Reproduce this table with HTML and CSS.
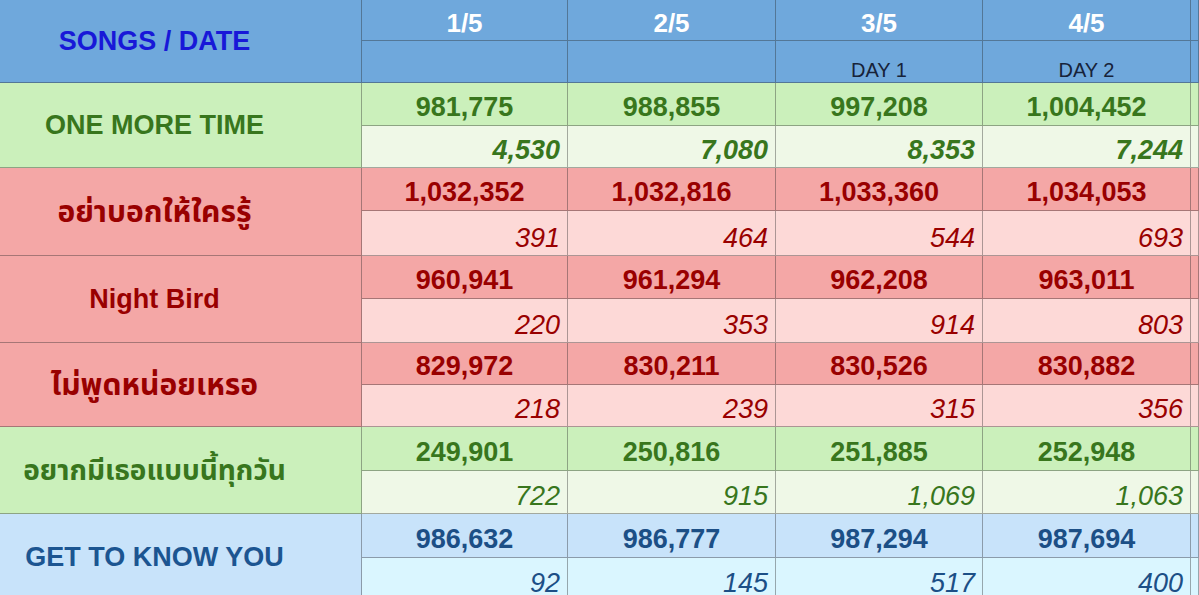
FILE: index.html
```html
<!DOCTYPE html>
<html lang="th">
<head>
<meta charset="utf-8">
<title>Songs / Date</title>
<link rel="stylesheet" href="styles.css">
</head>
<body>
<div class="sheet">
  <div class="name hdr-name">SONGS / DATE</div>
  <div class="cell hdr-date">1/5</div>
  <div class="cell hdr-date">2/5</div>
  <div class="cell hdr-date">3/5</div>
  <div class="cell hdr-date">4/5</div>
  <div class="cell hdr-date"></div>
  <div class="cell hdr-day"></div>
  <div class="cell hdr-day"></div>
  <div class="cell hdr-day">DAY 1</div>
  <div class="cell hdr-day">DAY 2</div>
  <div class="cell hdr-day"></div>

  <div class="name green">ONE MORE TIME</div>
  <div class="cell main green">981,775</div>
  <div class="cell main green">988,855</div>
  <div class="cell main green">997,208</div>
  <div class="cell main green">1,004,452</div>
  <div class="cell main green"></div>
  <div class="cell sub green bold">4,530</div>
  <div class="cell sub green bold">7,080</div>
  <div class="cell sub green bold">8,353</div>
  <div class="cell sub green bold">7,244</div>
  <div class="cell sub green"></div>

  <div class="name red thai">อย่าบอกให้ใครรู้</div>
  <div class="cell main red">1,032,352</div>
  <div class="cell main red">1,032,816</div>
  <div class="cell main red">1,033,360</div>
  <div class="cell main red">1,034,053</div>
  <div class="cell main red"></div>
  <div class="cell sub red">391</div>
  <div class="cell sub red">464</div>
  <div class="cell sub red">544</div>
  <div class="cell sub red">693</div>
  <div class="cell sub red"></div>

  <div class="name red">Night Bird</div>
  <div class="cell main red">960,941</div>
  <div class="cell main red">961,294</div>
  <div class="cell main red">962,208</div>
  <div class="cell main red">963,011</div>
  <div class="cell main red"></div>
  <div class="cell sub red">220</div>
  <div class="cell sub red">353</div>
  <div class="cell sub red">914</div>
  <div class="cell sub red">803</div>
  <div class="cell sub red"></div>

  <div class="name red thai">ไม่พูดหน่อยเหรอ</div>
  <div class="cell main red">829,972</div>
  <div class="cell main red">830,211</div>
  <div class="cell main red">830,526</div>
  <div class="cell main red">830,882</div>
  <div class="cell main red"></div>
  <div class="cell sub red">218</div>
  <div class="cell sub red">239</div>
  <div class="cell sub red">315</div>
  <div class="cell sub red">356</div>
  <div class="cell sub red"></div>

  <div class="name green thai thai-long">อยากมีเธอแบบนี้ทุกวัน</div>
  <div class="cell main green">249,901</div>
  <div class="cell main green">250,816</div>
  <div class="cell main green">251,885</div>
  <div class="cell main green">252,948</div>
  <div class="cell main green"></div>
  <div class="cell sub green">722</div>
  <div class="cell sub green">915</div>
  <div class="cell sub green">1,069</div>
  <div class="cell sub green">1,063</div>
  <div class="cell sub green"></div>

  <div class="name blue">GET TO KNOW YOU</div>
  <div class="cell main blue">986,632</div>
  <div class="cell main blue">986,777</div>
  <div class="cell main blue">987,294</div>
  <div class="cell main blue">987,694</div>
  <div class="cell main blue"></div>
  <div class="cell sub blue">92</div>
  <div class="cell sub blue">145</div>
  <div class="cell sub blue">517</div>
  <div class="cell sub blue">400</div>
  <div class="cell sub blue"></div>
</div>
</body>
</html>
```

FILE: styles.css
```css
html, body {
  margin: 0;
  padding: 0;
  background: #ffffff;
  overflow: hidden;
}

.sheet {
  display: grid;
  grid-template-columns: 362px 206px 208px 207px 208px 1fr;
  grid-template-rows: 41px 42px 43px 42px 43px 45px 43px 44px 42px 42px 44px 43px 44px 43px;
  width: 1199px;
  font-family: "Liberation Sans", Arial, "Noto Sans", "Noto Sans Thai", sans-serif;
}

.name,
.cell {
  box-sizing: border-box;
  border-right: 1px solid rgba(40, 40, 40, 0.38);
  border-bottom: 1px solid rgba(40, 40, 40, 0.38);
  display: flex;
  white-space: nowrap;
  overflow: hidden;
}

.name {
  grid-row: span 2;
  align-items: center;
  justify-content: center;
  padding-right: 52px;
  font-size: 27px;
  font-weight: bold;
}

.name.thai {
  font-size: 30px;
  padding-top: 2px;
}

.name.thai-long {
  font-size: 28px;
}

.cell {
  align-items: flex-end;
  font-size: 27px;
  line-height: 27px;
}

.hdr-name {
  background: #6fa8dc;
  color: #1818d8;
  padding-top: 1px;
}

.hdr-date {
  background: #6fa8dc;
  color: #ffffff;
  font-weight: bold;
  font-size: 26px;
  line-height: 26px;
  justify-content: center;
  padding-bottom: 4px;
}

.hdr-day {
  background: #6fa8dc;
  color: #17233a;
  font-size: 20px;
  line-height: 20px;
  justify-content: center;
  padding-bottom: 2px;
}

.main {
  font-weight: bold;
  justify-content: center;
  padding-bottom: 4px;
}

.sub {
  font-style: italic;
  justify-content: flex-end;
  padding-right: 7px;
  padding-bottom: 3px;
}

.sub.bold {
  font-weight: bold;
}

.name.green,
.main.green {
  background: #cbf0bb;
  color: #38761d;
}

.sub.green {
  background: #eff8e7;
  color: #38761d;
}

.name.red,
.main.red {
  background: #f4a7a6;
  color: #990000;
}

.sub.red {
  background: #fdd9d7;
  color: #990000;
}

.name.blue {
  background: #c8e3fa;
  color: #1c5591;
}

.main.blue {
  background: #c8e3fa;
  color: #1c4f86;
}

.sub.blue {
  background: #daf6ff;
  color: #1c4f86;
}
```
